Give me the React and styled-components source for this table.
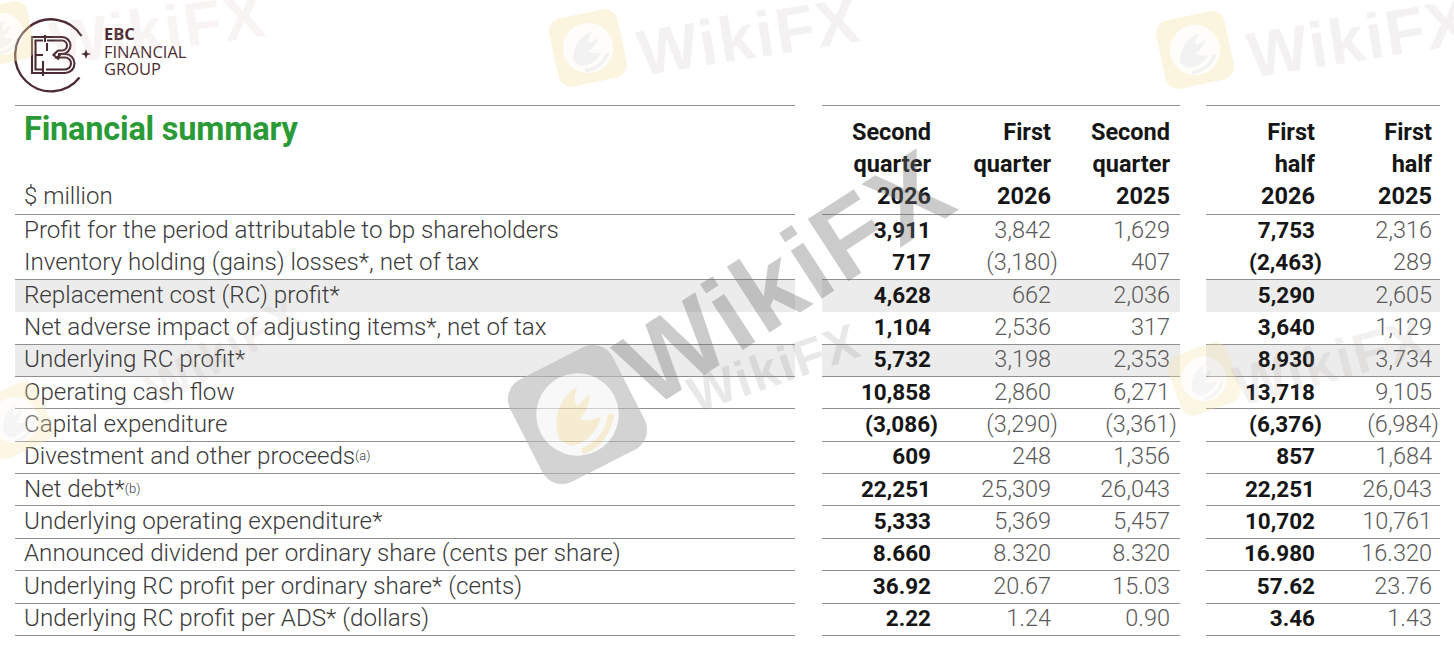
import React from "react";
import styled, { createGlobalStyle } from "styled-components";

const Global = createGlobalStyle`
  html, body { margin: 0; padding: 0; background: #ffffff; }
  body { font-family: Roboto, "Liberation Sans", sans-serif; }
`;

const Page = styled.div`
  position: relative;
  width: 1454px;
  height: 658px;
  overflow: hidden;
  background: #fff;
`;

const LogoRow = styled.div`
  display: flex;
  align-items: flex-start;
  gap: 10px;
  height: 105px;
  padding: 15px 0 0 12px;
  box-sizing: border-box;
  color: #4b2b31;
`;

const LogoText = styled.div`
  display: flex;
  flex-direction: column;
  font-family: "Open Sans", sans-serif;
  font-size: 16.5px;
  line-height: 17.5px;
  color: #4b2b31;
  margin-top: 10px;
`;

const LogoBold = styled.span`
  font-weight: 700;
`;

const Table = styled.div`
  display: grid;
  margin-left: 15px;
  grid-template-columns: 780px 27px 119px 120px 119px 26px 117px 117px;
  grid-template-rows: 110px repeat(13, 32.38px);
`;

const Cell = styled.div`
  box-sizing: border-box;
  display: flex;
  align-items: center;
  justify-content: ${(p) => (p.$label ? "flex-start" : "flex-end")};
  padding: ${(p) => (p.$label ? "0 0 2px 9px" : p.$half ? "0 8px 2px 0" : "0 10px 2px 0")};
  background: ${(p) => (p.$shade && !p.$gap ? "#ececec" : "transparent")};
  border-bottom: ${(p) => (p.$line && !p.$gap ? "1.5px solid #8f8f8f" : "none")};
  font-size: ${(p) => (p.$label ? "24.2px" : p.$bold ? "22.5px" : "23.5px")};
  white-space: nowrap;
  color: ${(p) => (p.$label ? "#3b3b3b" : p.$bold ? "#161616" : "#5a5a5a")};
  font-weight: ${(p) => (p.$bold ? 700 : 300)};
`;

const HeadCell = styled.div`
  box-sizing: border-box;
  border-top: ${(p) => (p.$gap ? "none" : "1.5px solid #8f8f8f")};
  border-bottom: ${(p) => (p.$gap ? "none" : "1.5px solid #8f8f8f")};
  display: flex;
  flex-direction: column;
  justify-content: flex-end;
  align-items: flex-end;
  padding: ${(p) => (p.$half ? "0 8px 2px 0" : "0 10px 2px 0")};
  font-weight: 700;
  font-size: 23.5px;
  line-height: 32px;
  color: #161616;
  text-align: right;
`;

const LabelHead = styled.div`
  box-sizing: border-box;
  border-top: 1.5px solid #8f8f8f;
  border-bottom: 1.5px solid #8f8f8f;
  display: flex;
  flex-direction: column;
  justify-content: space-between;
  padding: 4px 0 2px 9px;
`;

const Title = styled.div`
  font-weight: 700;
  font-size: 32.5px;
  line-height: 38px;
  color: #2a9a36;
  letter-spacing: -0.2px;
`;

const Unit = styled.div`
  font-weight: 300;
  font-size: 24px;
  line-height: 32px;
  color: #3b3b3b;
`;

const Sub = styled.sub`
  font-size: 13px;
  vertical-align: -5px;
  line-height: 0;
`;

const Close = styled.span`
  margin-right: -7px;
`;

const Overlay = styled.div`
  position: absolute;
  inset: 0;
  pointer-events: none;
`;

const Mark = styled.div`
  position: absolute;
  left: ${(p) => p.$x}px;
  top: ${(p) => p.$y}px;
  transform: rotate(${(p) => p.$r}deg);
  transform-origin: left center;
  font-family: "Liberation Sans", Arial, sans-serif;
  font-weight: 700;
  font-size: ${(p) => p.$size}px;
  line-height: 1;
  letter-spacing: 2px;
  color: ${(p) => p.$color};
  white-space: nowrap;
`;

const BadgeWrap = styled.div`
  position: absolute;
  left: ${(p) => p.$x}px;
  top: ${(p) => p.$y}px;
  width: ${(p) => p.$size}px;
  height: ${(p) => p.$size}px;
  transform: rotate(${(p) => p.$r}deg);
  opacity: ${(p) => p.$o};
`;

function Badge({ x, y, size, r, o, fill, eagle }) {
  return (
    <BadgeWrap $x={x} $y={y} $size={size} $r={r} $o={o}>
      <svg width={size} height={size} viewBox="0 0 100 100">
        <rect x="4" y="4" width="92" height="92" rx="18" fill={fill} />
        <circle cx="50" cy="50" r="33" fill="#ffffff" opacity="0.85" />
        <path
          d="M28 62 C30 44 42 32 60 30 C54 36 52 40 53 44 L66 40 C62 48 56 52 50 54 C54 58 60 60 66 60 C58 70 44 74 34 70 Z"
          fill={eagle}
        />
        <path d="M40 78 C52 80 66 74 74 62" stroke={eagle} strokeWidth="5" fill="none" />
      </svg>
    </BadgeWrap>
  );
}

function EbcLogo() {
  const c = "#4b2b31";
  return (
    <svg width="82" height="80" viewBox="0 0 82 80">
      <path d="M69.5 21 A36 36 0 1 0 67.5 62.5" stroke={c} strokeWidth="2.3" fill="none" />
      <path d="M74 34 L75.3 37.7 L79 39 L75.3 40.3 L74 44 L72.7 40.3 L69 39 L72.7 37.7 Z" fill={c} />
      <g stroke={c} strokeWidth="2.1" fill="none" strokeLinejoin="miter">
        <path d="M34 22 H20 V58 H34" />
        <path d="M31 25.5 H23.5 V54.5 H31" />
        <path d="M23.5 40 H31" />
        <path d="M33 20 V27" />
        <path d="M31 22 H50 A8.5 8.5 0 0 1 50 39 H46" />
        <path d="M35 25.5 H50 A5 5 0 0 1 50 35.5 H46" />
        <path d="M35 28 V36" />
        <path d="M46 35.5 L41.5 40 L47 44.5" />
        <path d="M49 39 L45 42.5 H53 A6 6 0 0 1 53 54.5 H34" />
        <path d="M47 39 H53 A9.5 9.5 0 0 1 53 58 H31" />
        <path d="M31 46 V61" />
      </g>
    </svg>
  );
}

const rows = [
  { label: "Profit for the period attributable to bp shareholders", v: ["3,911", "3,842", "1,629", "7,753", "2,316"] },
  { label: "Inventory holding (gains) losses*, net of tax", v: ["717", "(3,180)", "407", "(2,463)", "289"], line: true },
  { label: "Replacement cost (RC) profit*", v: ["4,628", "662", "2,036", "5,290", "2,605"], shade: true },
  { label: "Net adverse impact of adjusting items*, net of tax", v: ["1,104", "2,536", "317", "3,640", "1,129"], line: true },
  { label: "Underlying RC profit*", v: ["5,732", "3,198", "2,353", "8,930", "3,734"], shade: true, line: true },
  { label: "Operating cash flow", v: ["10,858", "2,860", "6,271", "13,718", "9,105"], line: true },
  { label: "Capital expenditure", v: ["(3,086)", "(3,290)", "(3,361)", "(6,376)", "(6,984)"], line: true },
  { label: "Divestment and other proceeds", sub: "(a)", v: ["609", "248", "1,356", "857", "1,684"], line: true },
  { label: "Net debt*", sub: "(b)", v: ["22,251", "25,309", "26,043", "22,251", "26,043"], line: true },
  { label: "Underlying operating expenditure*", v: ["5,333", "5,369", "5,457", "10,702", "10,761"], line: true },
  { label: "Announced dividend per ordinary share (cents per share)", v: ["8.660", "8.320", "8.320", "16.980", "16.320"], line: true },
  { label: "Underlying RC profit per ordinary share* (cents)", v: ["36.92", "20.67", "15.03", "57.62", "23.76"], line: true },
  { label: "Underlying RC profit per ADS* (dollars)", v: ["2.22", "1.24", "0.90", "3.46", "1.43"], line: true },
];

const heads = [
  ["Second", "quarter", "2026"],
  ["First", "quarter", "2026"],
  ["Second", "quarter", "2025"],
  null,
  ["First", "half", "2026"],
  ["First", "half", "2025"],
];

function Num({ value }) {
  if (value.startsWith("(")) {
    return (
      <span>
        {value.slice(0, -1)}
        <Close>)</Close>
      </span>
    );
  }
  return <span>{value}</span>;
}

export default function App() {
  return (
    <Page>
      <Global />
      <LogoRow>
        <EbcLogo />
        <LogoText>
          <LogoBold>EBC</LogoBold>
          <span>FINANCIAL</span>
          <span>GROUP</span>
        </LogoText>
      </LogoRow>
      <Table>
        <LabelHead>
          <Title>Financial summary</Title>
          <Unit>$ million</Unit>
        </LabelHead>
        <HeadCell $gap />
        {heads.map((h, i) =>
          h ? (
            <HeadCell key={i} $half={i > 3}>
              {h.map((t) => (
                <span key={t}>{t}</span>
              ))}
            </HeadCell>
          ) : (
            <HeadCell key={i} $gap />
          )
        )}
        {rows.map((r, ri) => (
          <React.Fragment key={ri}>
            <Cell $label $shade={r.shade} $line={r.line}>
              {r.label}
              {r.sub && <Sub>{r.sub}</Sub>}
            </Cell>
            <Cell $gap />
            <Cell $shade={r.shade} $line={r.line} $bold>
              <Num value={r.v[0]} />
            </Cell>
            <Cell $shade={r.shade} $line={r.line}>
              <Num value={r.v[1]} />
            </Cell>
            <Cell $shade={r.shade} $line={r.line}>
              <Num value={r.v[2]} />
            </Cell>
            <Cell $gap />
            <Cell $shade={r.shade} $line={r.line} $bold $half>
              <Num value={r.v[3]} />
            </Cell>
            <Cell $shade={r.shade} $line={r.line} $half>
              <Num value={r.v[4]} />
            </Cell>
          </React.Fragment>
        ))}
      </Table>
      <Overlay>
        <Badge x={-30} y={2} size={64} r={-12} o={0.35} fill="#f6e3a8" eagle="#e8e0d0" />
        <Mark $x={50} $y={14} $r={-8} $size={62} $color="rgba(200,170,170,0.13)">WikiFX</Mark>
        <Badge x={550} y={10} size={76} r={-12} o={0.35} fill="#f6e3a8" eagle="#dcdcdc" />
        <Mark $x={638} $y={22} $r={-9} $size={64} $color="rgba(180,170,170,0.16)">WikiFX</Mark>
        <Badge x={1157} y={12} size={76} r={-12} o={0.35} fill="#f6e3a8" eagle="#dcdcdc" />
        <Mark $x={1248} $y={24} $r={-9} $size={64} $color="rgba(180,170,170,0.16)">WikiFX</Mark>
        <Badge x={-20} y={385} size={70} r={-25} o={0.3} fill="#f6e3a8" eagle="#e0e0e0" />
        <Mark $x={150} $y={370} $r={-30} $size={48} $color="rgba(170,150,150,0.12)">WikiFX</Mark>
        <Badge x={1170} y={345} size={68} r={-20} o={0.3} fill="#f6e3a8" eagle="#e0e0e0" />
        <Mark $x={1235} $y={360} $r={-15} $size={56} $color="rgba(170,150,150,0.14)">WikiFX</Mark>
        <Badge x={515} y={352} size={125} r={-27} o={0.62} fill="#b9b9b9" eagle="#efe2b8" />
        <Mark $x={630} $y={325} $r={-33} $size={108} $color="rgba(110,110,110,0.36)">WikiFX</Mark>
        <Mark $x={690} $y={372} $r={-19} $size={50} $color="rgba(130,130,130,0.18)">WikiFX</Mark>
      </Overlay>
    </Page>
  );
}
